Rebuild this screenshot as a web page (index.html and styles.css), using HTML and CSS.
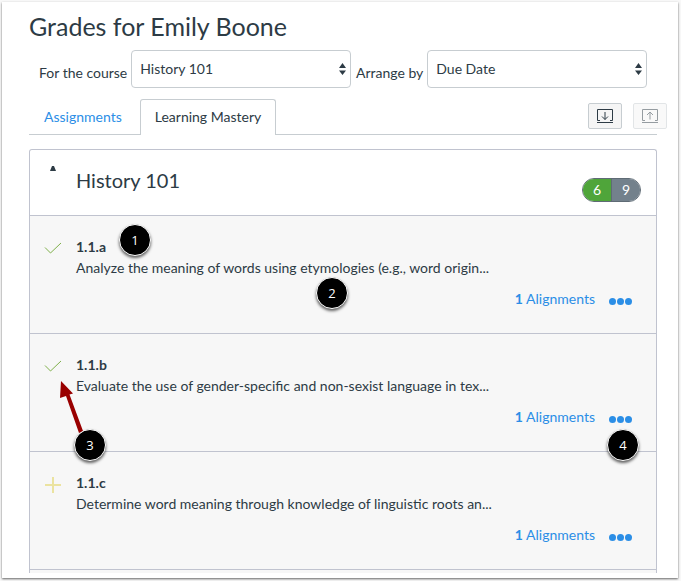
FILE: index.html
```html
<!DOCTYPE html>
<html lang="en">
	<head>
		<meta charset="utf-8">
		<title>Grades for Emily Boone</title>
		<link rel="stylesheet" href="styles.css">
	</head>
	<body>
		<main class="window">
			<h1>Grades for Emily Boone</h1>
			<!--filters-->
			<form class="filters">
				<label for="course">For the course</label>
				<div class="select">
					<select id="course">
						<option>History 101</option>
					</select>
					<svg class="arrows" viewBox="0 0 7 12"><path d="M3.5 0L7 5H0zM3.5 12L0 7.500h7z"/></svg>
				</div>
				<label for="arrange">Arrange by</label>
				<div class="select">
					<select id="arrange">
						<option>Due Date</option>
					</select>
					<svg class="arrows" viewBox="0 0 7 12"><path d="M3.5 0L7 5H0zM3.5 12L0 7.500h7z"/></svg>
				</div>
			</form>
			<!--/filters-->
			<!--tabs-->
			<nav class="tabs">
				<a class="tab" href="#assignments">Assignments</a>
				<a class="tab active" href="#mastery">Learning Mastery</a>
				<div class="tools">
					<button type="button" aria-label="Expand all">
						<svg width="18" height="16" viewBox="0 0 18 16"><path d="M4 12.500H1.500v-11h15v11H14M1 14.500h16M9 4v7.500M6 8.500l3 3 3-3"/></svg>
					</button>
					<button type="button" aria-label="Collapse all" disabled>
						<svg width="18" height="16" viewBox="0 0 18 16"><path d="M4 12.500H1.500v-11h15v11H14M1 14.500h16M9 11.500V4M6 7l3-3 3 3"/></svg>
					</button>
				</div>
			</nav>
			<!--/tabs-->
			<!--outcomes-->
			<section class="outcomes">
				<header class="group">
					<svg class="toggle" width="6" height="5" viewBox="0 0 6 5"><path d="M2 0h2l2 5H0z"/></svg>
					<h2>History 101</h2>
					<div class="pill"><span class="met">6</span><span class="total">9</span></div>
				</header>
				<article class="outcome">
					<svg class="status check" width="18" height="18" viewBox="0 0 18 18"><path d="M1 8.500l5.500 5.500L17 4"/></svg>
					<div class="info">
						<h3>1.1.a</h3>
						<p>Analyze the meaning of words using etymologies (e.g., word origin...</p>
						<div class="links">
							<a href="#a"><b>1</b> Alignments</a>
							<a class="more" href="#a-more" aria-label="More"><i></i><i></i><i></i></a>
						</div>
					</div>
					<span class="marker one">1</span>
					<span class="marker two">2</span>
				</article>
				<article class="outcome">
					<svg class="status check" width="18" height="18" viewBox="0 0 18 18"><path d="M1 8.500l5.500 5.500L17 4"/></svg>
					<div class="info">
						<h3>1.1.b</h3>
						<p>Evaluate the use of gender-specific and non-sexist language in tex...</p>
						<div class="links">
							<a href="#b"><b>1</b> Alignments</a>
							<a class="more" href="#b-more" aria-label="More"><i></i><i></i><i></i></a>
						</div>
					</div>
					<svg class="pointer" width="24" height="56" viewBox="0 0 24 56"><path d="M1 0L13 12.500L9.500 13.500L23 50L19 52L6 15L0 17z"/></svg>
					<span class="marker three">3</span>
					<span class="marker four">4</span>
				</article>
				<article class="outcome">
					<svg class="status plus" width="18" height="18" viewBox="0 0 18 18"><path d="M9 1v16M1 9h16"/></svg>
					<div class="info">
						<h3>1.1.c</h3>
						<p>Determine word meaning through knowledge of linguistic roots an...</p>
						<div class="links">
							<a href="#c"><b>1</b> Alignments</a>
							<a class="more" href="#c-more" aria-label="More"><i></i><i></i><i></i></a>
						</div>
					</div>
				</article>
			</section>
			<!--/outcomes-->
		</main>
	</body>
</html>
```

FILE: styles.css
```css
*{
	box-sizing:border-box;
}
body{
	margin:0;
	padding:2px 3px 3px 2px;
	background:#f8f8f8;
	font-family:Lato, "Liberation Sans", sans-serif;
	font-size:14px;
	line-height:20px;
	color:#2d3b45;
}
h1, h2, h3, p{
	margin:0;
	font-weight:normal;
}
a{
	color:#2b8ee6;
	text-decoration:none;
}
.window{
	padding:8px 21px 5px 27px;
	background:#fff;
	box-shadow:0 1px 2px rgba(0, 0, 0, 0.6);
}
h1{
	font-size:25px;
	line-height:32px;
}
/* filters */
.filters{
	display:flex;
	gap:4px;
	margin:8px 10px 0;
}
.filters label{
	padding-top:13px;
	white-space:nowrap;
}
.select{
	position:relative;
	flex:1;
}
.select + label{
	padding-left:1px;
}
select{
	display:block;
	width:100%;
	height:38px;
	padding:0 8px;
	appearance:none;
	background:#fff;
	border:1px solid #c7cdd1;
	border-radius:4px;
	font:inherit;
	color:inherit;
}
.arrows{
	position:absolute;
	right:5px;
	top:13px;
	width:7px;
	height:12px;
	fill:#2d3b45;
}
/* tabs */
.tabs{
	display:flex;
	margin-top:11px;
	border-bottom:1px solid #c7cdd1;
}
.tab{
	height:36px;
	margin-bottom:-1px;
	padding:7px 14px;
	border:1px solid transparent;
	border-bottom:0;
	border-radius:3px 3px 0 0;
}
.tab.active{
	margin-left:3px;
	background:#fff;
	border-color:#c7cdd1;
	color:#2d3b45;
}
.tools{
	display:flex;
	gap:11px;
	margin:4px -10px 0 auto;
}
.tools button{
	display:flex;
	align-items:center;
	justify-content:center;
	width:34px;
	height:26px;
	padding:0;
	background:#f5f5f5;
	border:1px solid #c7cdd1;
	border-radius:2px;
}
.tools button:disabled{
	opacity:0.5;
}
.tools svg{
	fill:none;
	stroke:#2d3b45;
}
/* outcomes */
.outcomes{
	margin-top:14px;
	padding-bottom:3px;
	background:#f7f7f7;
	border:1px solid #c0c3cf;
	border-bottom:0;
	border-radius:3px 3px 0 0;
}
.group{
	display:flex;
	padding:15px 15px 9px 20px;
	background:#fff;
	border-bottom:1px solid #c0c3cf;
	border-radius:3px 3px 0 0;
}
.toggle{
	margin-top:1px;
	fill:#2d3b45;
}
h2{
	margin-left:20px;
	font-size:20px;
	line-height:30px;
}
.pill{
	display:flex;
	align-self:flex-end;
	margin:13px 0 4px auto;
	overflow:hidden;
	border:1px solid #5f6b75;
	border-radius:12px;
	color:#fff;
	line-height:22px;
	text-align:center;
}
.pill span{
	width:28px;
}
.pill .met{
	width:29px;
	background:#4fa53a;
	border-right:1px solid #5f6b75;
}
.total{
	background:#73818c;
}
.outcome{
	position:relative;
	display:flex;
	gap:14px;
	padding:21px 24px 24px 14px;
	border-bottom:1px solid #c0c3cf;
}
.status{
	flex:none;
	margin-top:2px;
	fill:none;
}
.check{
	stroke:#7fb04a;
}
.plus{
	margin-top:3px;
	stroke:#ebe3a0;
	stroke-width:2;
}
.info{
	flex:1;
}
h3{
	font-size:14px;
	font-weight:bold;
}
p{
	line-height:22px;
}
.links{
	display:flex;
	justify-content:flex-end;
	gap:14px;
	margin-top:10px;
}
.links b{
	font-weight:bold;
}
.more{
	display:flex;
	gap:1px;
	padding-top:9px;
}
.more i{
	width:7px;
	height:7px;
	background:#2b8ee6;
	border-radius:50%;
}
/* numbered markers lying over the list */
.marker{
	position:absolute;
	z-index:1;
	width:32px;
	height:32px;
	background:#000;
	border:1px solid #fff;
	border-radius:50%;
	box-shadow:0 2px 3px rgba(0, 0, 0, 0.6);
	color:#fff;
	font-family:"Open Sans", sans-serif;
	font-size:13px;
	line-height:30px;
	text-align:center;
}
.one{
	left:89px;
	top:8px;
}
.two{
	left:286px;
	top:61px;
}
.three{
	left:44px;
	top:95px;
}
.four{
	right:17px;
	top:95px;
}
.pointer{
	position:absolute;
	left:30px;
	top:47px;
	fill:#990000;
}
```
